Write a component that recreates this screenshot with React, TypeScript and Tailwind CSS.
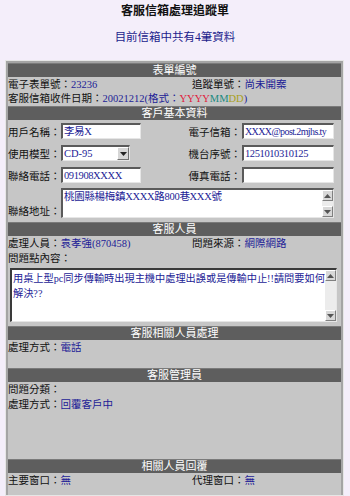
import React from "react";

const FONT = { fontFamily: '"Liberation Serif", "Noto Sans CJK TC", serif' };

function Header({ children }: { children: React.ReactNode }) {
  return (
    <div className="h-[14px] bg-[#5e5e5e] border-t border-[#7a7a7a] text-center text-[11px] leading-[13px] text-white">
      {children}
    </div>
  );
}

function V({ children }: { children: React.ReactNode }) {
  return <span className="text-[#1c1c96]">{children}</span>;
}

function Input({ w, children }: { w: string; children?: React.ReactNode }) {
  return (
    <div
      className={`${w} h-[16px] bg-white border-t-2 border-l-2 border-b border-r border-t-[#5a5a5a] border-l-[#5a5a5a] border-b-[#e6e6e6] border-r-[#e6e6e6] overflow-hidden whitespace-nowrap text-[10.5px] leading-[13px] pl-[1px] text-[#1c1c96] tracking-[-0.4px]`}
    >
      {children}
    </div>
  );
}

function Arrow({ up }: { up?: boolean }) {
  return (
    <div className="w-[11px] h-[11px] bg-[#d8d8d8] border border-t-white border-l-white border-b-[#808080] border-r-[#808080] flex items-center justify-center">
      <svg width="7" height="4" viewBox="0 0 7 4">
        {up ? <polygon points="0,4 7,4 3.5,0" fill="#555" /> : <polygon points="0,0 7,0 3.5,4" fill="#555" />}
      </svg>
    </div>
  );
}

function Scrollbar() {
  return (
    <div className="w-[11px] h-full flex flex-col justify-between bg-[#ececec] shrink-0">
      <Arrow up />
      <Arrow />
    </div>
  );
}

export default function App() {
  return (
    <div className="min-h-[496px] bg-[#f4eefa] text-[#111]" style={FONT}>
      <div className="pt-[4px] text-center text-[12px] font-bold leading-[14px]">客服信箱處理追蹤單</div>
      <div className="mt-[12px] text-center text-[11.5px] leading-[14px] text-[#1c1c8c]">目前信箱中共有4筆資料</div>

      <div className="mt-[16px] ml-[5px] w-[339px] border border-[#e6e6e6] h-[436px] overflow-hidden">
        <div className="border-2 border-[#a4a4a4] bg-[#c6c6c6] h-[500px] text-[10.5px] leading-[14px]">
          {/* 表單編號 */}
          <Header>表單編號</Header>
          <div className="flex h-[15px] items-center">
            <div className="w-[184px]">電子表單號：<V>23236</V></div>
            <div>追蹤單號：<V>尚未開案</V></div>
          </div>
          <div className="flex h-[14px] items-center">
            <div>
              客服信箱收件日期：<V>20021212(格式：</V>
              <span className="text-[#e0203c]">YYYY</span>
              <span className="text-[#1a8a80]">MM</span>
              <span className="text-[#a8a020]">DD</span>
              <V>)</V>
            </div>
          </div>

          {/* 客戶基本資料 */}
          <Header>客戶基本資料</Header>
          <div className="flex h-[22px] items-center">
            <div className="w-[53px] pt-[4px]">用戶名稱：</div>
            <Input w="w-[80px]">李易X</Input>
            <div className="w-[101px] text-right pr-[1px] pt-[4px]">電子信箱：</div>
            <Input w="w-[92px]">
              <span className="text-[10px] tracking-[-0.6px]">XXXX@post.2mjhs.ty</span>
            </Input>
          </div>
          <div className="flex h-[22px] items-center">
            <div className="w-[53px] pt-[4px]">使用模型：</div>
            <div className="w-[69px] h-[16px] bg-white border-t-2 border-l-2 border-b border-r border-t-[#5a5a5a] border-l-[#5a5a5a] border-b-[#e6e6e6] border-r-[#e6e6e6] flex">
              <div className="flex-1 pl-[1px] leading-[13px] text-[#1c1c96]">CD-95</div>
              <div className="w-[12px] h-[13px] bg-[#d6d6d6] border border-t-white border-l-white border-b-[#707070] border-r-[#707070] flex items-center justify-center">
                <svg width="7" height="4" viewBox="0 0 7 4">
                  <polygon points="0,0 7,0 3.5,4" fill="#222" />
                </svg>
              </div>
            </div>
            <div className="w-[112px] text-right pr-[1px] pt-[4px]">機台序號：</div>
            <Input w="w-[92px]">1251010310125</Input>
          </div>
          <div className="flex h-[22px] items-center">
            <div className="w-[53px] pt-[4px]">聯絡電話：</div>
            <Input w="w-[80px]">091908XXXX</Input>
            <div className="w-[101px] text-right pr-[1px] pt-[4px]">傳真電話：</div>
            <Input w="w-[92px]"></Input>
          </div>
          <div className="flex h-[36px]">
            <div className="w-[53px] self-end pb-[3px]">聯絡地址：</div>
            <div className="mt-[2px] w-[273px] h-[30px] bg-white border-t-2 border-l-2 border-b border-r border-t-[#5a5a5a] border-l-[#5a5a5a] border-b-[#e6e6e6] border-r-[#e6e6e6] flex">
              <div className="flex-1 pl-[1px] leading-[13px] text-[#1c1c96] tracking-[-0.3px]">桃園縣楊梅鎮XXXX路800巷XXX號</div>
              <Scrollbar />
            </div>
          </div>

          {/* 客服人員 */}
          <Header>客服人員</Header>
          <div className="flex h-[15px] items-center">
            <div className="w-[184px]">處理人員：<V>袁孝強(870458)</V></div>
            <div>問題來源：<V>網際網路</V></div>
          </div>
          <div className="h-[15px] flex items-center">問題點內容：</div>
          <div className="h-[60px] pt-[2px] pl-[2px]">
            <div className="w-[327px] h-[54px] bg-white border-t-2 border-l-2 border-b border-r border-t-[#3a3a3a] border-l-[#3a3a3a] border-b-[#e6e6e6] border-r-[#e6e6e6] flex">
              <div className="flex-1 pl-[1px] pt-[1px] text-[10.2px] leading-[15px] text-[#1c1c96]">
                用桌上型pc同步傳輸時出現主機中處理出誤或是傳輸中止!!請問要如何解決??
              </div>
              <Scrollbar />
            </div>
          </div>

          {/* 客服相關人員處理 */}
          <Header>客服相關人員處理</Header>
          <div className="h-[15px] flex items-center">處理方式：<V>電話</V></div>
          <div className="h-[13px]" />

          {/* 客服管理員 */}
          <Header>客服管理員</Header>
          <div className="h-[15px] flex items-center">問題分類：</div>
          <div className="h-[15px] flex items-center">處理方式：<V>回覆客戶中</V></div>
          <div className="h-[47px]" />

          {/* 相關人員回覆 */}
          <Header>相關人員回覆</Header>
          <div className="flex h-[15px] items-center">
            <div className="w-[184px]">主要窗口：<V>無</V></div>
            <div>代理窗口：<V>無</V></div>
          </div>
        </div>
      </div>
    </div>
  );
}
